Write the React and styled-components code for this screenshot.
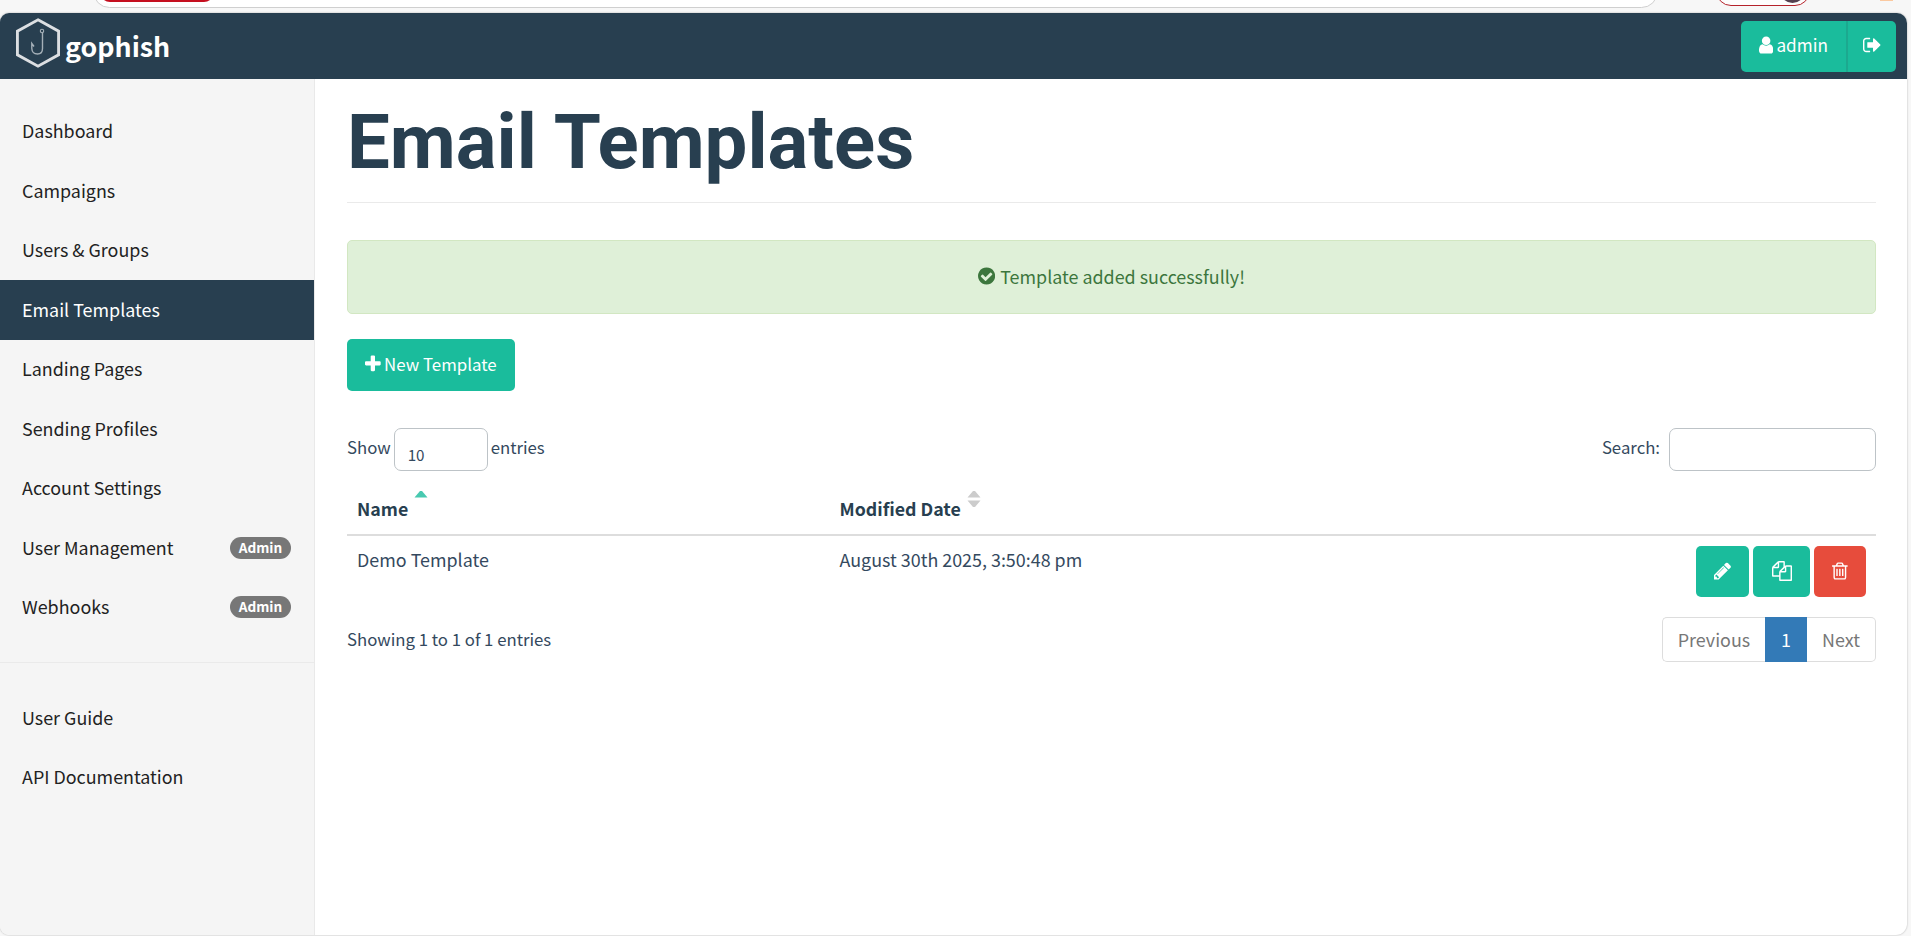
import React from "react";
import styled, { createGlobalStyle } from "styled-components";

const NAVY = "#283f50";
const TEAL = "#1abc9c";

const GlobalStyle = createGlobalStyle`
  *, *::before, *::after { box-sizing: border-box; }
  html, body { margin: 0; height: 100%; overflow: hidden; }
  body {
    background: #f7f7f7;
    color: #34495e;
    font-family: "Noto Sans CJK SC", "Open Sans", sans-serif;
    font-size: 17.9px;
    line-height: 28px;
  }
  button, input { font: inherit; color: inherit; }
`;

const ICONS = {
  user: [256, 1280, "M1536 1399q0 109-62.5 187t-150.5 78h-854q-88 0-150.5-78t-62.5-187q0-85 8.5-160.5t31.5-152 58.5-131 94-89 134.5-34.5q131 128 313 128t313-128q76 0 134.5 34.5t94 89 58.5 131 31.5 152 8.5 160.5zm-256-887q0 159-112.5 271.5t-271.5 112.5-271.5-112.5-112.5-271.5 112.5-271.5 271.5-112.5 271.5 112.5 112.5 271.5z"],
  signOut: [64, 1600, "M704 1440q0 4 1 20t.5 26.5-3 23.5-10 19.5-20.5 6.5h-320q-119 0-203.5-84.5t-84.5-203.5v-704q0-119 84.5-203.5t203.5-84.5h320q13 0 22.5 9.5t9.5 22.5q0 4 1 20t.5 26.5-3 23.5-10 19.5-20.5 6.5h-320q-66 0-113 47t-47 113v704q0 66 47 113t113 47h312l11.5 1 11.5 3 8 5.5 7 9 2 13.5zm928-544q0 26-19 45l-544 544q-19 19-45 19t-45-19-19-45v-288h-448q-26 0-45-19t-19-45v-384q0-26 19-45t45-19h448v-288q0-26 19-45t45-19 45 19l544 544q19 19 19 45z"],
  plus: [192, 1408, "M1600 736v192q0 40-28 68t-68 28h-416v416q0 40-28 68t-68 28h-192q-40 0-68-28t-28-68v-416h-416q-40 0-68-28t-28-68v-192q0-40 28-68t68-28h416v-416q0-40 28-68t68-28h192q40 0 68 28t28 68v416h416q40 0 68 28t28 68z"],
  pencil: [128, 1536, "M491 1536l91-91-235-235-91 91v107h128v128h107zm523-928q0-22-22-22-10 0-17 7l-542 542q-7 7-7 17 0 22 22 22 10 0 17-7l542-542q7-7 7-17zm-54-192l416 416-832 832h-416v-416zm683 96q0 53-37 90l-166 166-416-416 166-165q36-38 90-38 53 0 91 38l235 234q37 39 37 91z"],
  files: [0, 1792, "M1696 384q40 0 68 28t28 68v1216q0 40-28 68t-68 28h-960q-40 0-68-28t-28-68v-288h-544q-40 0-68-28t-28-68v-672q0-40 20-88t48-76l408-408q28-28 76-48t88-20h416q40 0 68 28t28 68v328q68-40 128-40h416zm-544 213l-299 299h299v-299zm-640-384l-299 299h299v-299zm196 647l316-316v-416h-384v416q0 40-28 68t-68 28h-416v640h512v-256q0-40 20-88t48-76zm956 804v-1152h-384v416q0 40-28 68t-68 28h-416v640h896z"],
  trash: [192, 1408, "M704 736v576q0 14-9 23t-23 9h-64q-14 0-23-9t-9-23v-576q0-14 9-23t23-9h64q14 0 23 9t9 23zm256 0v576q0 14-9 23t-23 9h-64q-14 0-23-9t-9-23v-576q0-14 9-23t23-9h64q14 0 23 9t9 23zm256 0v576q0 14-9 23t-23 9h-64q-14 0-23-9t-9-23v-576q0-14 9-23t23-9h64q14 0 23 9t9 23zm128 724v-948h-896v948q0 22 7 40.5t14.5 27 10.5 8.5h832q3 0 10.5-8.5t14.5-27 7-40.5zm-672-1076h448l-48-117q-7-9-17-11h-317q-10 2-17 11zm928 32v64q0 14-9 23t-23 9h-96v948q0 83-47 143.5t-113 60.5h-832q-66 0-113-58.5t-47-141.5v-952h-96q-14 0-23-9t-9-23v-64q0-14 9-23t23-9h309l70-167q15-37 54-63t79-26h320q40 0 79 26t54 63l70 167h309q14 0 23 9t9 23z"],
  check: [128, 1536, "M1412 734q0-28-18-46l-91-90q-19-19-45-19t-45 19l-408 407-226-226q-19-19-45-19t-45 19l-91 90q-18 18-18 46 0 27 18 45l362 362q19 19 45 19 27 0 46-19l543-543q18-18 18-45zm252 162q0 209-103 385.5t-279.5 279.5-385.5 103-385.5-103-279.5-279.5-103-385.5 103-385.5 279.5-279.5 385.5-103 385.5 103 279.5 279.5 103 385.5z"],
};

const Glyph = styled.svg`
  display: block;
  flex: none;
  height: 20px;
  fill: currentColor;
`;

function Icon({ name }) {
  const [x, w, d] = ICONS[name];
  return (
    <Glyph viewBox={`${x} 0 ${w} 1792`} width={(w / 1792) * 20} aria-hidden="true">
      <path d={d} />
    </Glyph>
  );
}

const Screen = styled.div`
  display: flex;
  flex-direction: column;
  height: 936px;
`;

const BrowserStrip = styled.div`
  display: flex;
  flex: none;
  height: 13px;
  padding-left: 93px;
  overflow: hidden;
`;

const AddressBar = styled.div`
  width: 1565px;
  height: 33px;
  margin-top: -25px;
  padding: 6px 0 0 6px;
  border: 1px solid #cfcfcf;
  border-radius: 17px;
  background: #fff;
`;

const SecurityChip = styled.div`
  width: 114px;
  height: 20px;
  border-radius: 10px;
  background: #c50f1f;
`;

const ProfilePill = styled.div`
  display: flex;
  justify-content: flex-end;
  width: 94px;
  height: 30px;
  margin: -24px 0 0 58px;
  padding: 1px 4px;
  border: 1px solid #b5222b;
  border-radius: 15px;
  background: #fdfdfd;
`;

const Avatar = styled.div`
  width: 25px;
  height: 25px;
  border-radius: 50%;
  background: #54404f;
`;

const ExtensionDot = styled.div`
  width: 13px;
  height: 1px;
  margin-left: 70px;
  background: #fbc9a0;
`;

const Window = styled.div`
  display: flex;
  flex-direction: column;
  width: 1907px;
  height: 922px;
  border-radius: 9px 10px 11px 9px;
  background: #fff;
  box-shadow: 0 0 2px rgba(0, 0, 0, 0.3);
  overflow: hidden;
`;

const Navbar = styled.header`
  display: flex;
  flex: none;
  justify-content: space-between;
  height: 66px;
  padding: 0 11px 0 16px;
  background: ${NAVY};
`;

const Brand = styled.a`
  display: flex;
  color: #fff;
  font-size: 26.8px;
  font-weight: 700;
  line-height: 40px;
`;

const Logo = styled.svg`
  width: 44px;
  height: 50px;
  margin-top: 5px;
`;

const BrandName = styled.span`
  margin: 13px 0 0 5px;
`;

const UserGroup = styled.div`
  display: flex;
  height: 51px;
  margin-top: 8px;
`;

const Button = styled.button`
  display: flex;
  align-items: center;
  gap: ${(p) => p.$gap || 0}px;
  width: ${(p) => p.$w}px;
  height: ${(p) => p.$h || 51}px;
  padding: 0 0 ${(p) => p.$lift || 0}px;
  justify-content: center;
  border: 0;
  border-radius: 5px;
  background: ${(p) => (p.$danger ? "#e74c3c" : TEAL)};
  color: #fff;
  font-size: 16.85px;
`;

const UserButton = styled(Button)`
  border-radius: 5px 0 0 5px;
  border-right: 1px solid #1ca98f;
  font-size: 17.2px;
`;

const LogoutButton = styled(Button)`
  border-radius: 0 5px 5px 0;
  border-left: 1px solid #1ca98f;
`;

const Columns = styled.div`
  display: flex;
  flex: 1;
`;

const Sidebar = styled.nav`
  flex: none;
  width: 315px;
  padding-top: 22.5px;
  border-right: 1px solid #e9e9e9;
  background: #f5f5f5;
`;

const NavItem = styled.a`
  display: flex;
  align-items: center;
  justify-content: space-between;
  height: 59.5px;
  padding: 0 23px 2.4px 22px;
  background: ${(p) => (p.$active ? NAVY : "transparent")};
  color: ${(p) => (p.$active ? "#fff" : "#222")};
`;

const Divider = styled.hr`
  height: 1px;
  margin: 25px 0;
  border: 0;
  background: #eaeaea;
`;

const Badge = styled.span`
  width: 61px;
  height: 22px;
  margin-top: 2.6px;
  border-radius: 11px;
  background: #777;
  color: #fff;
  font-size: 13.6px;
  font-weight: 700;
  line-height: 21px;
  text-align: center;
`;

const Main = styled.main`
  flex: 1;
  padding: 0 31px 0 32px;
`;

const Title = styled.h1`
  height: 124px;
  margin: 0;
  padding-top: 19px;
  border-bottom: 1px solid #eaeaea;
  color: ${NAVY};
  font-family: Roboto, sans-serif;
  font-size: 76.15px;
  font-weight: 700;
  line-height: 88px;
`;

const Alert = styled.div`
  display: flex;
  align-items: center;
  justify-content: center;
  gap: 5px;
  height: 74px;
  margin: 37px 0 25px;
  padding-bottom: 2px;
  border: 1px solid #d2e7c2;
  border-radius: 5px;
  background: #dff0d8;
  color: #3c763d;
`;

const Controls = styled.div`
  display: flex;
  justify-content: space-between;
  height: 43px;
  margin-top: 37px;
`;

const ControlLabel = styled.label`
  display: flex;
  gap: ${(p) => p.$gap}px;
  font-size: 16.75px;
  line-height: 39px;
`;

const LengthSelect = styled.div`
  width: 94px;
  height: 43px;
  padding: 6px 13px 0;
  border: 1px solid #bdc3c7;
  border-radius: 7px;
  font-size: 15.2px;
`;

const SearchInput = styled.input`
  width: 207px;
  height: 43px;
  border: 1px solid #bdc3c7;
  border-radius: 7px;
  background: #fff;
`;

const Table = styled.div`
  display: grid;
  grid-template-columns: 482.5px 1fr auto;
`;

const HeadCell = styled.div`
  display: flex;
  gap: ${(p) => p.$gap || 0}px;
  height: 65px;
  padding: 23px 10px 0;
  border-bottom: 2px solid #ddd;
  color: ${NAVY};
  font-size: 17.8px;
  font-weight: 700;
`;

const SortArrows = styled.svg`
  width: 14px;
  height: 18px;
  margin-top: -4px;
`;

const Cell = styled.div`
  height: 72px;
  padding: 9px 10px;
`;

const ActionCell = styled.div`
  display: flex;
  gap: 4px;
  padding: 10px;
`;

const Footer = styled.div`
  display: flex;
  justify-content: space-between;
  margin-top: 9px;
  line-height: 44px;
`;

const Info = styled.span`
  font-size: 16.75px;
`;

const Pagination = styled.div`
  display: flex;
  height: 45px;
`;

const PageButton = styled.a`
  width: ${(p) => p.$w}px;
  border: 1px solid ${(p) => (p.$active ? "#337ab7" : "#ddd")};
  border-width: 1px ${(p) => (p.$edge === "left" ? 0 : 1)}px 1px ${(p) => (p.$edge === "right" ? 0 : 1)}px;
  border-radius: ${(p) => (p.$edge === "left" ? "5px 0 0 5px" : p.$edge === "right" ? "0 5px 5px 0" : 0)};
  background: ${(p) => (p.$active ? "#337ab7" : "#fff")};
  color: ${(p) => (p.$active ? "#fff" : "#777")};
  line-height: 42px;
  text-align: center;
`;

const NAV = [
  ["Dashboard"],
  ["Campaigns"],
  ["Users & Groups"],
  ["Email Templates"],
  ["Landing Pages"],
  ["Sending Profiles"],
  ["Account Settings"],
  ["User Management", true],
  ["Webhooks", true],
];

export default function App() {
  return (
    <Screen>
      <GlobalStyle />
      <BrowserStrip>
        <AddressBar>
          <SecurityChip />
        </AddressBar>
        <ProfilePill>
          <Avatar />
        </ProfilePill>
        <ExtensionDot />
      </BrowserStrip>
      <Window>
        <Navbar>
          <Brand>
            <Logo viewBox="0 0 44 50" fill="none">
              <path d="M22 1.8 42.6 13.2V36.8L22 48.2 1.4 36.8V13.2Z" stroke="#dcdfe2" strokeWidth="2.9" />
              <circle cx="26" cy="13" r="1.7" stroke="#a5b0b8" strokeWidth="1.1" />
              <path d="M26.5 15V30.5C26.5 34 24.5 36 21.5 36S16 34 15.8 30.5V25.5L18 28.5" stroke="#a5b0b8" strokeWidth="1.4" />
            </Logo>
            <BrandName>gophish</BrandName>
          </Brand>
          <UserGroup>
            <UserButton $w={106} $gap={3} $lift={3}>
              <Icon name="user" />
              admin
            </UserButton>
            <LogoutButton $w={49} $lift={3}>
              <Icon name="signOut" />
            </LogoutButton>
          </UserGroup>
        </Navbar>
        <Columns>
          <Sidebar>
            {NAV.map(([label, admin]) => (
              <NavItem key={label} $active={label === "Email Templates"}>
                {label}
                {admin && <Badge>Admin</Badge>}
              </NavItem>
            ))}
            <Divider />
            <NavItem>User Guide</NavItem>
            <NavItem>API Documentation</NavItem>
          </Sidebar>
          <Main>
            <Title>Email Templates</Title>
            <Alert>
              <Icon name="check" />
              Template added successfully!
            </Alert>
            <Button $w={168} $h={52} $gap={3} $lift={2}>
              <Icon name="plus" />
              New Template
            </Button>
            <Controls>
              <ControlLabel $gap={3}>
                Show
                <LengthSelect>10</LengthSelect>
                entries
              </ControlLabel>
              <ControlLabel $gap={9}>
                Search:
                <SearchInput />
              </ControlLabel>
            </Controls>
            <Table>
              <HeadCell $gap={6}>
                Name
                <SortArrows viewBox="0 0 14 18">
                  <path d="M0.5 7.5 6 1h2l5.500 6.500Z" fill="#48c9b0" />
                </SortArrows>
              </HeadCell>
              <HeadCell $gap={6}>
                Modified Date
                <SortArrows viewBox="0 0 14 18">
                  <path d="M0.5 7.500 6 1h2l5.500 6.500ZM0.500 10.500H13.500L8 17H6Z" fill="#ccc" />
                </SortArrows>
              </HeadCell>
              <HeadCell />
              <Cell>Demo Template</Cell>
              <Cell>August 30th 2025, 3:50:48 pm</Cell>
              <ActionCell>
                <Button $w={53} $lift={2}>
                  <Icon name="pencil" />
                </Button>
                <Button $w={57} $lift={2}>
                  <Icon name="files" />
                </Button>
                <Button $w={52} $lift={2} $danger>
                  <Icon name="trash" />
                </Button>
              </ActionCell>
            </Table>
            <Footer>
              <Info>Showing 1 to 1 of 1 entries</Info>
              <Pagination>
                <PageButton $w={103} $edge="left">Previous</PageButton>
                <PageButton $w={42} $active>1</PageButton>
                <PageButton $w={69} $edge="right">Next</PageButton>
              </Pagination>
            </Footer>
          </Main>
        </Columns>
      </Window>
    </Screen>
  );
}
